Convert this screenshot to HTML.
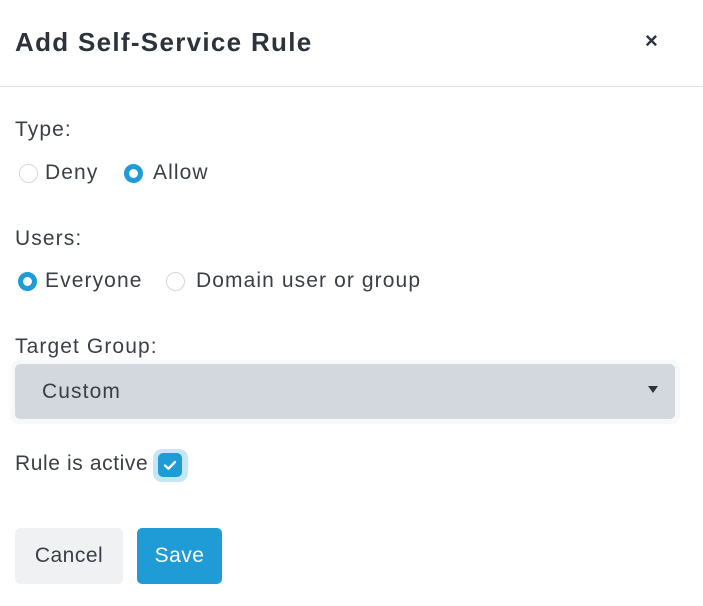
<!DOCTYPE html>
<html><head><style>
body{margin:0;width:703px;height:606px;background:#fff;font-family:"Liberation Sans",sans-serif;color:#3a3f47;position:relative;overflow:hidden}
.a{position:absolute;white-space:nowrap}
.t{font-size:21px;line-height:24px;letter-spacing:1.1px}
.r{position:absolute;width:19px;height:19px;border-radius:50%;box-sizing:border-box;border:1px solid #d4d7db;background:#fff}
.r.on{border:5.5px solid #1f9bd6}
</style></head><body>
<div class="a" style="left:15px;top:27px;font-size:26px;font-weight:bold;color:#2d333b;line-height:30px;letter-spacing:1.3px">Add Self-Service Rule</div>
<div class="a" style="left:645px;top:28px;font-size:22px;font-weight:bold;color:#2d333b">×</div>
<div class="a" style="left:0;top:86px;width:703px;height:1px;background:#dfe2e5"></div>

<div class="a t" style="left:15px;top:118px">Type:</div>
<div class="r" style="left:19px;top:164px"></div>
<div class="a t" style="left:45px;top:161px">Deny</div>
<div class="r on" style="left:124px;top:164px"></div>
<div class="a t" style="left:153px;top:161px">Allow</div>

<div class="a t" style="left:15px;top:227px">Users:</div>
<div class="r on" style="left:18px;top:272px"></div>
<div class="a t" style="left:45px;top:269px">Everyone</div>
<div class="r" style="left:166px;top:272px"></div>
<div class="a t" style="left:196px;top:269px">Domain user or group</div>

<div class="a t" style="left:15px;top:335px">Target Group:</div>
<div class="a" style="left:11px;top:360px;width:669px;height:64px;border-radius:8px;background:#f6f8f9"></div>
<div class="a" style="left:15px;top:364px;width:660px;height:55px;border-radius:5px;background:#d3d8df"></div>
<div class="a t" style="left:42px;top:380px">Custom</div>
<div class="a" style="left:648px;top:386px;width:0;height:0;border-left:5px solid transparent;border-right:5px solid transparent;border-top:7px solid #2d333b"></div>

<div class="a t" style="left:15px;top:452px;letter-spacing:0.6px">Rule is active</div>
<div class="a" style="left:153px;top:449px;width:35px;height:33px;border-radius:9px;background:#c5e6f6"></div>
<div class="a" style="left:158px;top:453px;width:24px;height:24px;border-radius:5px;background:#1f9bd6"></div>
<svg class="a" style="left:158px;top:453px" width="24" height="24"><path d="M7 12.5l3.5 3.2L17 9" fill="none" stroke="#fff" stroke-width="2.4" stroke-linecap="round" stroke-linejoin="round"/></svg>

<div class="a t" style="left:15px;top:528px;width:108px;height:56px;border-radius:5px;background:#f0f1f3;text-align:center;line-height:56px;letter-spacing:0.5px">Cancel</div>
<div class="a t" style="left:137px;top:528px;width:85px;height:56px;border-radius:5px;background:#1f9bd6;color:#fff;text-align:center;line-height:56px;letter-spacing:0.5px">Save</div>
</body></html>
